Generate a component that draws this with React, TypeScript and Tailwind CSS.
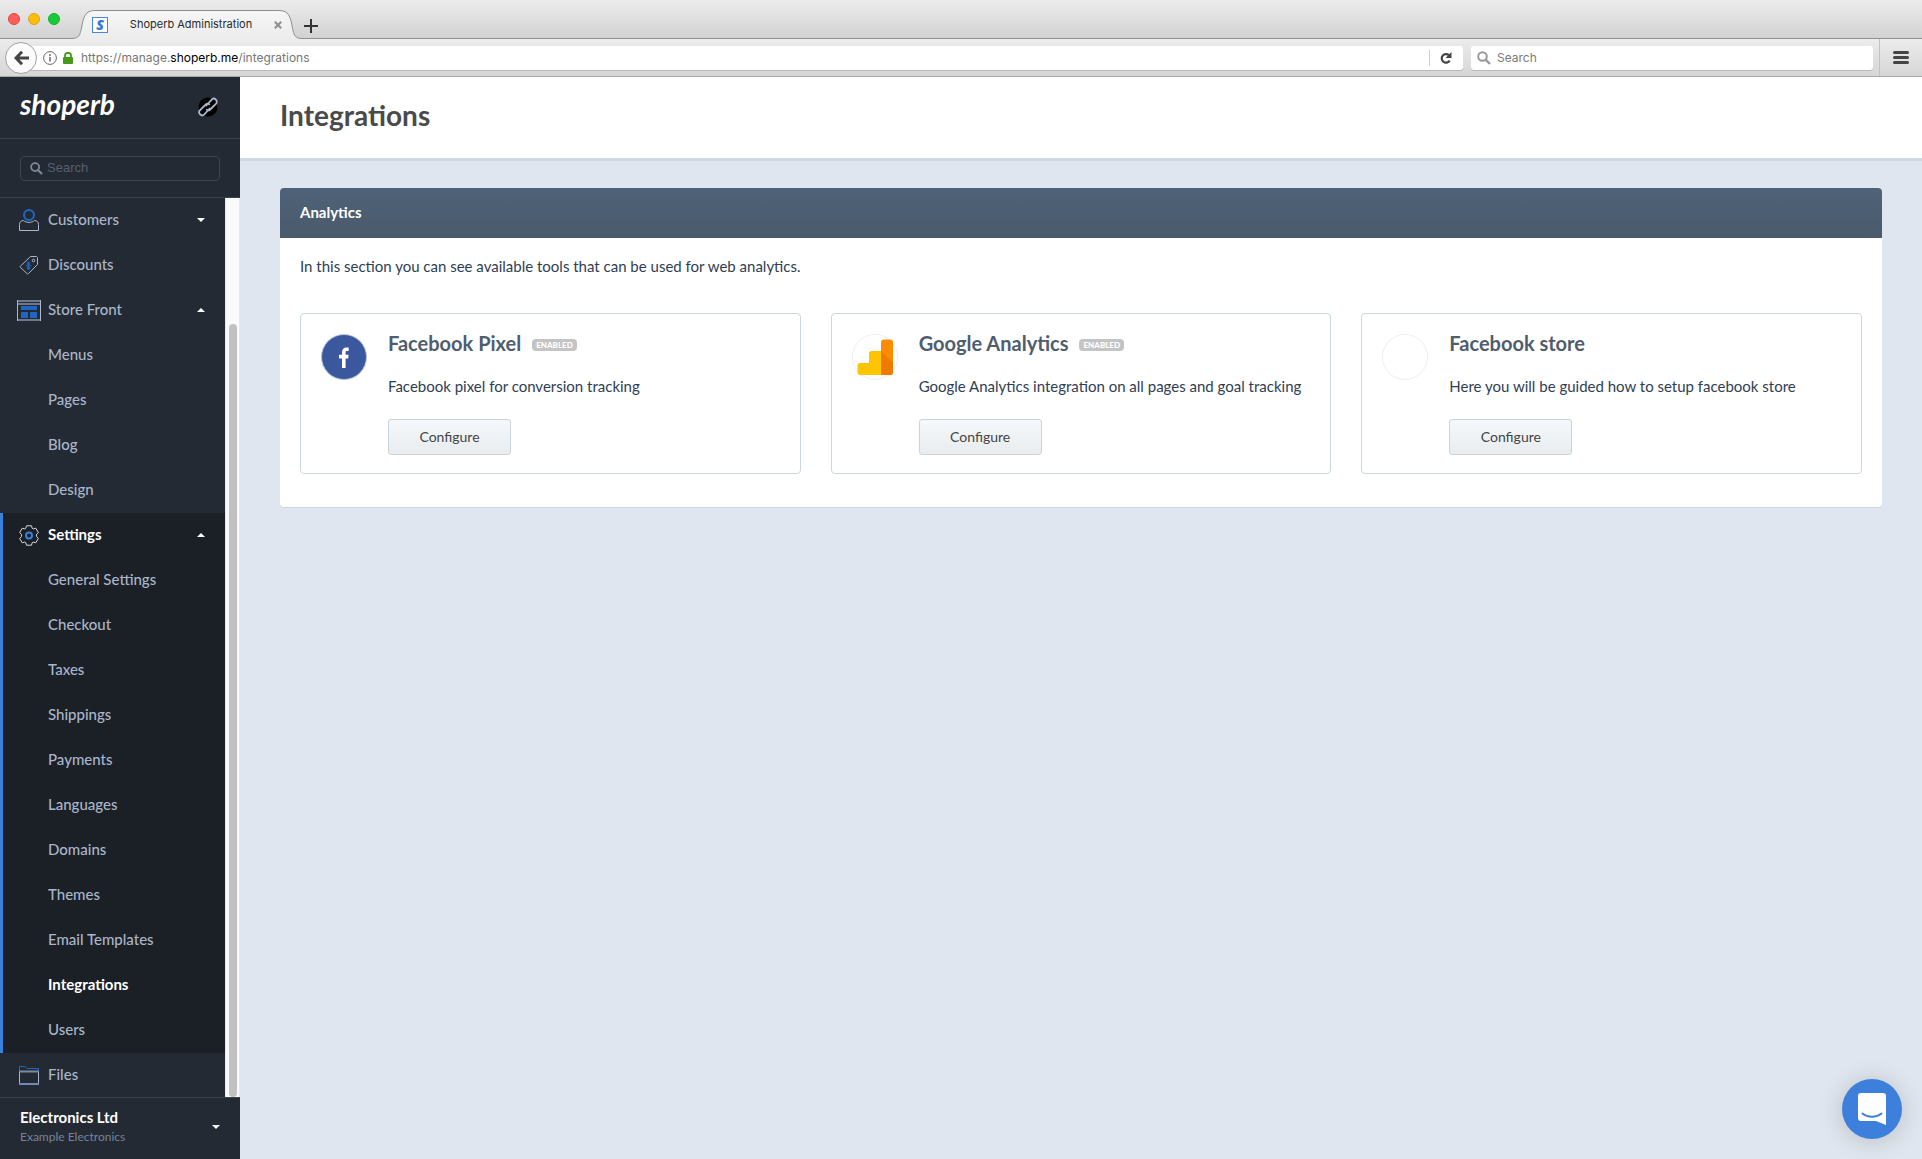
import React from "react";

type NavItem = {
  label: string;
  icon?: React.ReactNode;
  arrow?: "up" | "down";
  active?: boolean;
};

type Integration = {
  name: string;
  description: string;
  enabled: boolean;
  logo: React.ReactNode;
};

const CustomersIcon = () => (
  <svg width="20" height="22" viewBox="0 0 20 22" fill="none">
    <circle cx="10" cy="6" r="5" stroke="#1f66c1" strokeWidth="2" />
    <path
      d="M4.500 11.500C2 11.800.5 13 .5 15.500V21.500H19.500V15.500C19.500 13 18 11.800 15.500 11.500C13 14 7 14 4.500 11.500Z"
      stroke="#a9b6cb"
    />
  </svg>
);

const DiscountsIcon = () => (
  <svg width="20" height="20" viewBox="0 0 20 20" fill="none">
    <path
      d="M11.500 1.500H17.500L18.500 2.500V9.500L9.500 18.500C9 19 8.500 19 8 18.500L1.500 12.500C1 12 1 11.500 1.500 11Z"
      stroke="#a9b6cb"
      strokeLinejoin="round"
    />
    <circle cx="14.500" cy="5.500" r="1.300" stroke="#a9b6cb" />
    <circle cx="9.500" cy="8.500" r="1.300" stroke="#1f66c1" />
    <circle cx="9.500" cy="13" r="1.300" stroke="#1f66c1" />
    <path d="M6.500 10.800H12.500M9.500 6.500V15" stroke="#1f66c1" />
  </svg>
);

const StoreFrontIcon = () => (
  <svg width="24" height="21" viewBox="0 0 24 21" fill="none">
    <path d="M0 1H24M0 4H24M0 20H24" stroke="#6d7a8d" strokeWidth="2" />
    <path d="M.5 0V21M23.500 0V21" stroke="#a9b6cb" />
    <path d="M4 6H20V10H4ZM4 12H11V18H4ZM13 12H20V18H13Z" fill="#1f66c1" />
  </svg>
);

const SettingsIcon = () => (
  <svg width="20" height="21" viewBox="0 0 20 21" fill="none">
    <path
      d="M7.500 .8H12.500L13.200 3.300L14.300 3.900L16.800 3.200L19.300 7.500L17.500 9.600V11.400L19.300 13.500L16.800 17.800L14.300 17.100L13.200 17.700L12.500 20.200H7.500L6.800 17.700L5.700 17.100L3.200 17.800L.7 13.500L2.500 11.400V9.600L.7 7.500L3.200 3.200L5.700 3.900L6.800 3.300Z"
      stroke="#d5dae1"
      strokeLinejoin="round"
    />
    <circle cx="10" cy="10.500" r="3" stroke="#3b80dc" strokeWidth="2" />
  </svg>
);

const FilesIcon = () => (
  <svg width="20" height="19" viewBox="0 0 20 19" fill="none">
    <path d="M.5 5V.5H6L8 2.500H19.500V5" stroke="#1f66c1" />
    <path d="M.5 5V18M19.500 5V18" stroke="#a9b6cb" />
    <path d="M0 5.500H20" stroke="#7c8a9e" strokeWidth="2" />
    <path d="M0 18H20" stroke="#6f8bb5" strokeWidth="2" />
  </svg>
);

const SearchIcon = ({ className }: { className: string }) => (
  <svg className={className} viewBox="0 0 14 14" fill="none" stroke="currentColor">
    <circle cx="5.500" cy="5.500" r="4.300" strokeWidth="2" />
    <path d="M8.800 8.800L13 13" strokeWidth="2.400" />
  </svg>
);

const FacebookLogo = () => (
  <svg width="46" height="46" viewBox="0 0 46 46">
    <circle cx="23" cy="23" r="22.500" fill="#3b579d" stroke="#b9c4dc" />
    <path
      d="M21 34V24.500H18V20.800H21V18.200C21 15 22.800 13.400 25.600 13.400C26.600 13.400 27.400 13.500 27.700 13.600V16.900H26C24.900 16.900 24.600 17.500 24.600 18.500V20.800H27.600L27.200 24.500H24.600V34Z"
      fill="#fff"
    />
  </svg>
);

const AnalyticsLogo = () => (
  <svg width="46" height="46" viewBox="0 0 46 46">
    <circle cx="23" cy="23" r="22.500" fill="#fff" stroke="#eceef1" />
    <path d="M29 17H19.500Q17 17 17 19.500V29H8Q5.500 29 5.500 31.500V38Q5.500 41 8.500 41H29Z" fill="#ffc400" />
    <path d="M29 8.500Q29 5.500 32 5.500H38Q41 5.500 41 8.500V38Q41 41 38 41H29Z" fill="#fb8c00" />
    <path d="M29 17L41 29V38Q41 41 38 41H29Z" fill="#f07a00" />
  </svg>
);

const EmptyLogo = () => (
  <svg width="46" height="46" viewBox="0 0 46 46">
    <circle cx="23" cy="23" r="22.500" fill="#fff" stroke="#eceef1" />
  </svg>
);

const Caret = ({ direction }: { direction: "up" | "down" }) => (
  <svg width="8" height="4" viewBox="0 0 8 4" fill="#fff">
    <path d={direction === "up" ? "M0 4L4 0L8 4Z" : "M0 0H8L4 4Z"} />
  </svg>
);

const topItems: NavItem[] = [
  { label: "Customers", icon: <CustomersIcon />, arrow: "down" },
  { label: "Discounts", icon: <DiscountsIcon /> },
  { label: "Store Front", icon: <StoreFrontIcon />, arrow: "up" },
  { label: "Menus" },
  { label: "Pages" },
  { label: "Blog" },
  { label: "Design" },
];

const settingsItems: NavItem[] = [
  { label: "Settings", icon: <SettingsIcon />, arrow: "up", active: true },
  { label: "General Settings" },
  { label: "Checkout" },
  { label: "Taxes" },
  { label: "Shippings" },
  { label: "Payments" },
  { label: "Languages" },
  { label: "Domains" },
  { label: "Themes" },
  { label: "Email Templates" },
  { label: "Integrations", active: true },
  { label: "Users" },
];

const integrations: Integration[] = [
  {
    name: "Facebook Pixel",
    description: "Facebook pixel for conversion tracking",
    enabled: true,
    logo: <FacebookLogo />,
  },
  {
    name: "Google Analytics",
    description: "Google Analytics integration on all pages and goal tracking",
    enabled: true,
    logo: <AnalyticsLogo />,
  },
  {
    name: "Facebook store",
    description: "Here you will be guided how to setup facebook store",
    enabled: false,
    logo: <EmptyLogo />,
  },
];

const NavLink = ({ item }: { item: NavItem }) => (
  <li>
    <a
      href="#"
      className={`flex h-[45px] items-center pr-5 pb-px text-[15px] ${
        item.active ? "font-bold text-white" : "font-medium text-[#a9b6cb]"
      }`}
    >
      <span className="flex w-12 shrink-0 justify-center pl-[10px]">{item.icon}</span>
      <span className="flex-1 pb-px">{item.label}</span>
      {item.arrow && <Caret direction={item.arrow} />}
    </a>
  </li>
);

const BrowserChrome = () => (
  <div className="shrink-0 font-['Inter',sans-serif]">
    <div className="flex h-[39px] items-end border-b border-[#8f8f8f] bg-linear-to-b from-[#ececec] to-[#d2d2d2]">
      <div className="flex gap-2 self-start pt-[13px] pl-2">
        <span className="size-3 rounded-full border border-[#e0443e] bg-[#ff5f57]" />
        <span className="size-3 rounded-full border border-[#dfa123] bg-[#ffbd0a]" />
        <span className="size-3 rounded-full border border-[#14ae33] bg-[#18cc38]" />
      </div>
      <div className="relative -mb-px ml-[10px] flex h-[29px] w-[234px] items-center pr-[22px] pl-[22px]">
        <svg className="absolute inset-0" width="234" height="29" viewBox="0 0 234 29">
          <defs>
            <linearGradient id="tab" x1="0" y1="0" x2="0" y2="1">
              <stop offset="0" stopColor="#f6f6f6" />
              <stop offset="1" stopColor="#ececec" />
            </linearGradient>
          </defs>
          <path
            d="M0 28.500H2C9 28.500 10 25 11.500 18C13.500 7 15 .5 25 .5H209C219 .5 220.500 7 222.500 18C224 25 225 28.500 232 28.500H234V29H0Z"
            fill="url(#tab)"
          />
          <path
            d="M0 28.500H2C9 28.500 10 25 11.500 18C13.500 7 15 .5 25 .5H209C219 .5 220.500 7 222.500 18C224 25 225 28.500 232 28.500H234"
            fill="none"
            stroke="#8f8f8f"
          />
        </svg>
        <span className="relative flex size-4 items-center justify-center border border-[#4a86dc] bg-white font-['Open_Sans',sans-serif] text-sm leading-none font-extrabold text-[#3577d4] italic">
          S
        </span>
        <span className="relative flex-1 text-center text-[11px] text-[#2a2a2a]">Shoperb Administration</span>
        <button type="button" aria-label="Close tab" className="relative">
          <svg width="8" height="8" viewBox="0 0 8 8" stroke="#8e8e8e" strokeWidth="2">
            <path d="M.8 .8L7.200 7.200M7.200 .8L.8 7.200" />
          </svg>
        </button>
      </div>
      <button type="button" aria-label="New tab" className="mb-[5px]">
        <svg width="14" height="14" viewBox="0 0 14 14" stroke="#333" strokeWidth="2">
          <path d="M7 0V14M0 7H14" />
        </svg>
      </button>
    </div>
    <div className="flex h-[38px] items-center border-b border-[#a9a9a9] bg-linear-to-b from-[#ececec] to-[#d6d6d6]">
      <button
        type="button"
        aria-label="Back"
        className="relative ml-[5px] flex size-8 shrink-0 items-center justify-center rounded-full border border-[#a2a2a2] bg-[#fbfbfb]"
      >
        <svg width="15" height="14" viewBox="0 0 15 14" fill="none" stroke="#444" strokeWidth="3">
          <path d="M8 .8L2 7L8 13.200M2.500 7H15" />
        </svg>
      </button>
      <div className="-ml-4 flex h-6 flex-1 items-center rounded-[3px] bg-white pl-[22px] shadow-[0_1px_0_#b8b8b8]">
        <svg width="14" height="14" viewBox="0 0 14 14" fill="none" stroke="#666">
          <circle cx="7" cy="7" r="6.400" />
          <path d="M7 6V10.500M7 3.300V5" strokeWidth="1.500" />
        </svg>
        <svg className="ml-[6px]" width="10" height="12" viewBox="0 0 10 12">
          <path d="M2 6V3.800A3 3 0 0 1 8 3.800V6" fill="none" stroke="#47991a" strokeWidth="1.800" />
          <rect y="5" width="10" height="7" rx=".8" fill="#47991a" />
        </svg>
        <div
          role="textbox"
          aria-label="Address"
          contentEditable
          suppressContentEditableWarning
          className="ml-2 flex-1 text-xs text-[#777] outline-none"
        >
          https://manage.<span className="text-black">shoperb.me</span>/integrations
        </div>
        <button type="button" aria-label="Reload" className="flex h-4 w-[34px] items-center border-l border-[#cfcfcf] pl-[10px]">
          <svg width="12" height="12" viewBox="0 0 12 12">
            <path d="M9 3.200A4.300 4.300 0 1 0 9.700 8.600" fill="none" stroke="#444" strokeWidth="2.200" />
            <path d="M11.500 0V6H5.500Z" fill="#444" />
          </svg>
        </button>
      </div>
      <label className="ml-2 flex h-6 w-[402px] items-center gap-[6px] rounded-[3px] bg-white px-[6px] text-[#999] shadow-[0_1px_0_#b8b8b8]">
        <SearchIcon className="size-[14px]" />
        <input
          type="text"
          placeholder="Search"
          aria-label="Web search"
          className="min-w-0 flex-1 text-xs text-[#333] outline-none placeholder:text-[#7a7a7a]"
        />
      </label>
      <button type="button" aria-label="Menu" className="ml-[6px] flex h-full w-[43px] items-center justify-center border-l border-[#c2c2c2]">
        <svg width="16" height="13" viewBox="0 0 16 13" stroke="#444" strokeWidth="3" strokeLinecap="round">
          <path d="M1.500 1.500H14.500M1.500 6.500H14.500M1.500 11.500H14.500" />
        </svg>
      </button>
    </div>
  </div>
);

const Sidebar = () => (
  <aside className="flex w-60 shrink-0 flex-col bg-[#242a33]">
    <div className="flex h-[62px] shrink-0 items-center justify-between border-b border-[#3b424d] pr-[22px] pb-px pl-5">
      <a href="#" className="pb-[6px] text-[28px] leading-none font-bold text-white italic">
        shoperb
      </a>
      <a href="#" aria-label="Open shop">
        <svg width="20" height="20" viewBox="0 0 20 20" fill="none">
          <circle cx="10" cy="10" r="9.500" fill="#000" />
          <g stroke="#a9b6cb" strokeWidth="1.800" strokeLinecap="round">
            <path d="M8.300 8.500L13.700 2.600A2.900 2.900 0 0 1 17.900 6.800L12.200 12.500A2.600 2.600 0 0 1 8.800 12.800" />
            <path d="M11.700 11.500L6.300 17.400A2.900 2.900 0 0 1 2.100 13.200L7.800 7.500A2.600 2.600 0 0 1 11.200 7.200" />
          </g>
        </svg>
      </a>
    </div>
    <div className="flex h-[59px] shrink-0 items-center border-b border-[#3b424d] px-5">
      <label className="flex h-[25px] w-full items-center gap-1 rounded-[4px] border border-[#3d4450] px-[9px] text-[#7c8899]">
        <SearchIcon className="mt-px size-[13px]" />
        <input
          type="text"
          placeholder="Search"
          aria-label="Search"
          className="min-w-0 flex-1 font-['Liberation_Sans',sans-serif] text-[13px] text-white outline-none placeholder:text-[#566070]"
        />
      </label>
    </div>
    <div className="flex min-h-0 flex-1">
      <nav className="flex-1 overflow-hidden">
        <ul>
          {topItems.map((item) => (
            <NavLink key={item.label} item={item} />
          ))}
        </ul>
        <ul className="bg-[#1b1f26] shadow-[inset_3px_0_0_#3b80dc]">
          {settingsItems.map((item) => (
            <NavLink key={item.label} item={item} />
          ))}
        </ul>
        <ul>
          <NavLink item={{ label: "Files", icon: <FilesIcon /> }} />
        </ul>
      </nav>
      <div className="flex w-[15px] flex-col justify-end border-x border-[#e8e8e8] bg-[#fafafa] px-[3px]">
        <div className="h-[86%] w-2 rounded-full bg-[#c1c1c1]" />
      </div>
    </div>
    <div className="flex h-[62px] shrink-0 items-center justify-between border-t border-[#3b424d] px-5 pb-1">
      <div>
        <div className="text-[15px] leading-5 font-bold text-white">Electronics Ltd</div>
        <div className="text-xs leading-5 text-[#76839a]">Example Electronics</div>
      </div>
      <Caret direction="down" />
    </div>
  </aside>
);

const IntegrationCard = ({ integration }: { integration: Integration }) => (
  <div className="flex gap-[21px] rounded-[4px] border border-[#cdd7df] px-5 pt-5 pb-[18px]">
    <div className="shrink-0">{integration.logo}</div>
    <div>
      <div className="flex items-center gap-[11px]">
        <h3 className="text-xl leading-[18px] font-bold text-[#4f5d6e]">{integration.name}</h3>
        {integration.enabled && (
          <span className="mt-1 rounded-[4px] bg-[#c4c4c4] px-1 text-[8px] leading-3 font-black text-white">
            ENABLED
          </span>
        )}
      </div>
      <p className="mt-6 text-[15px] leading-5 text-[#2f3e54]">{integration.description}</p>
      <button
        type="button"
        className="mt-[23px] h-9 w-[123px] rounded-[3px] border border-[#c9d4dd] bg-linear-to-b from-[#f6f9fb] to-[#e8ecef] pb-px text-sm text-[#444]"
      >
        Configure
      </button>
    </div>
  </div>
);

const App = () => {
  return (
    <div className="flex h-screen flex-col overflow-hidden font-['Lato',sans-serif]">
      <BrowserChrome />
      <div className="flex min-h-0 flex-1">
        <Sidebar />
        <main className="relative flex-1 bg-[#e0e6ef]">
          <header className="border-b-3 border-[#cfd9e2] bg-white px-10 pt-[18px] pb-[22px]">
            <h1 className="text-[28px] leading-[41px] font-bold text-[#4a4a4a]">Integrations</h1>
          </header>
          <section className="mx-10 mt-[27px] overflow-hidden rounded-[4px] bg-white shadow-[0_1px_0_#cdd6df]">
            <h2 className="bg-linear-to-b from-[#4f6278] to-[#4a5a6b] px-5 pb-0.5 text-[15px] leading-[48px] font-bold text-white">
              Analytics
            </h2>
            <div className="px-5 pt-[18px] pb-[33px]">
              <p className="text-[15px] leading-5 text-[#2f3e54]">
                In this section you can see available tools that can be used for web analytics.
              </p>
              <div className="mt-[37px] grid grid-cols-3 gap-[30px]">
                {integrations.map((integration) => (
                  <IntegrationCard key={integration.name} integration={integration} />
                ))}
              </div>
            </div>
          </section>
          <button
            type="button"
            aria-label="Open chat"
            className="absolute right-5 bottom-5 flex size-[60px] items-center justify-center rounded-full bg-[#3d80db] shadow-[0_2px_24px_rgba(0,0,0,0.18)]"
          >
            <svg width="28" height="32" viewBox="0 0 28 32">
              <path d="M3 0H25Q28 0 28 3V32C25 31 21 29 18 28H3Q0 28 0 25V3Q0 0 3 0Z" fill="#fff" />
              <path d="M4.500 20.500C9.500 24.700 18.500 24.700 23.500 20.500" fill="none" stroke="#3d80db" strokeWidth="2" strokeLinecap="round" />
            </svg>
          </button>
        </main>
      </div>
    </div>
  );
};

export default App;
